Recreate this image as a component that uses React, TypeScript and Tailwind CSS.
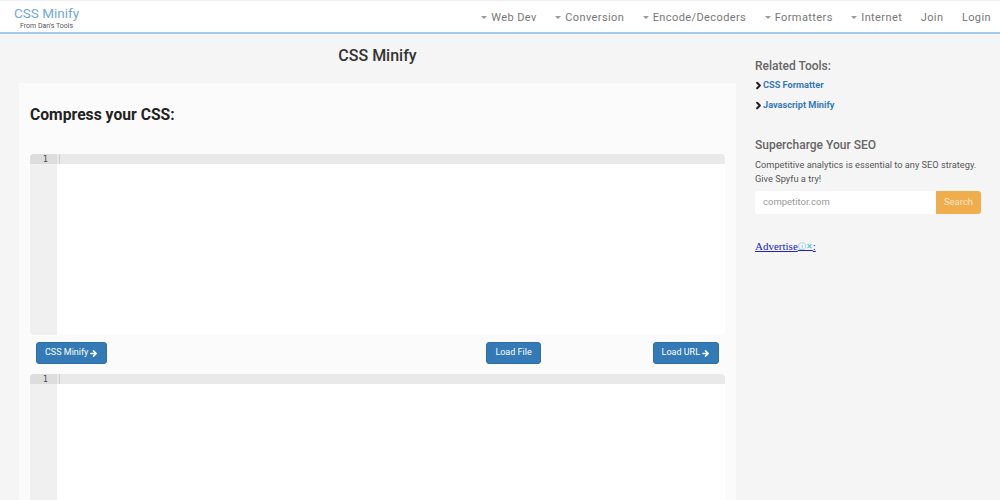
import React from 'react';
import { ChevronRight, ArrowRight } from 'lucide-react';

const navItems = ['Web Dev', 'Conversion', 'Encode/Decoders', 'Formatters', 'Internet'];

const Caret = () => <span className="mr-[4px] inline-block h-0 w-0 border-x-[3px] border-t-[3px] border-x-transparent border-t-[#999] align-middle" />;

const Navbar = () => (
  <nav className="flex h-[34px] items-center justify-between border-t border-b-2 border-t-[#f0f0f0] border-b-[#a5cbe8] bg-white pr-[9px] pl-[14px]">
    <div className="flex flex-col pt-[3px]">
      <span className="text-[13.5px] leading-[17px] text-[#6fa9d8]">CSS Minify</span>
      <span className="pl-[6px] text-[7px] leading-[9px] text-[#555]">From Dan's Tools</span>
    </div>
    <div className="flex items-center gap-[18.5px] pt-[3px] text-[11px] tracking-[0.4px] text-[#777]">
      {navItems.map((item) => (
        <span key={item}>
          <Caret />
          {item}
        </span>
      ))}
      <span>Join</span>
      <span>Login</span>
    </div>
  </nav>
);

const Editor = ({ className }: { className: string }) => (
  <div className={`flex flex-col overflow-hidden rounded-[4px] bg-white ${className}`}>
    <div className="flex h-[10px] shrink-0 bg-[#e9e9e9]">
      <div className="w-[27px] bg-[#dddddd] pt-px pl-[13px] text-[8px] leading-[10px] text-[#444]" style={{ fontFamily: '"DejaVu Sans Mono", monospace' }}>1</div>
      <div className="ml-[2px] h-full w-px bg-[#cfcfcf]" />
    </div>
    <div className="flex min-h-0 flex-1">
      <div className="w-[27px] bg-[#f0f0f0]" />
    </div>
  </div>
);

const BlueButton = ({ label, arrow, className }: { label: string; arrow?: boolean; className?: string }) => (
  <button className={`flex h-[22px] items-center gap-[1px] rounded-[3px] border border-[#2e6da4] bg-[#337ab7] px-[8px] text-[9px] text-white ${className ?? ''}`}>
    {label}
    {arrow && <ArrowRight size={9} strokeWidth={4} />}
  </button>
);

const Sidebar = () => (
  <aside className="flex w-[226px] shrink-0 flex-col pt-[24px]">
    <h3 className="text-[12px] leading-[16px] font-medium text-[#666]">Related Tools:</h3>
    <ul className="mt-[5px] flex flex-col gap-[8px] text-[9.2px] leading-[12px] font-bold text-[#337ab7]">
      <li className="flex items-center"><ChevronRight size={11} strokeWidth={4.5} className="-mr-px -ml-[2px] text-[#222]" />CSS Formatter</li>
      <li className="flex items-center"><ChevronRight size={11} strokeWidth={4.5} className="-mr-px -ml-[2px] text-[#222]" />Javascript Minify</li>
    </ul>
    <h3 className="mt-[26px] text-[12px] leading-[16px] font-medium text-[#666]">Supercharge Your SEO</h3>
    <p className="mt-[5px] text-[9.25px] leading-[13.5px] text-[#555]">Competitive analytics is essential to any SEO strategy. Give Spyfu a try!</p>
    <div className="mt-[6px] flex h-[23px] w-[226px]">
      <div className="flex flex-1 items-center rounded-l-[3px] bg-white pl-[8px] text-[9.5px] text-[#999]">competitor.com</div>
      <div className="flex w-[45px] items-center justify-center rounded-r-[3px] bg-[#f0ad4e] text-[9.5px] text-[#fbe3c2]">Search</div>
    </div>
    <div className="mt-[26px] flex items-center text-[11px] leading-[13px] text-[#2020d0] underline" style={{ fontFamily: '"Liberation Serif", serif' }}>
      Advertise
      <span className="text-[8px] text-[#4cb8d8]">ⓘ✕</span>
      :
    </div>
  </aside>
);

export default function App() {
  return (
    <div className="h-[500px] w-[1000px] overflow-hidden bg-[#f5f5f5]" style={{ fontFamily: 'Roboto, sans-serif' }}>
      <Navbar />
      <div className="flex gap-[19px] pr-[19px] pl-[19px]">
        <main className="flex w-[717px] shrink-0 flex-col">
          <h1 className="mt-[12px] text-center text-[16px] leading-[20px] font-medium text-[#333]">CSS Minify</h1>
          <section className="mt-[17px] flex flex-col bg-[#fbfbfb] px-[11px]">
            <h2 className="mt-[22px] text-[15.7px] leading-[20px] font-bold text-[#222]">Compress your CSS:</h2>
            <Editor className="mt-[29px] h-[181px]" />
            <div className="flex h-[39px] items-center px-[6px] pb-[3px]">
              <BlueButton label="CSS Minify" arrow />
              <BlueButton label="Load File" className="ml-[379px]" />
              <BlueButton label="Load URL" arrow className="ml-auto" />
            </div>
            <Editor className="h-[200px]" />
          </section>
        </main>
        <Sidebar />
      </div>
    </div>
  );
}
